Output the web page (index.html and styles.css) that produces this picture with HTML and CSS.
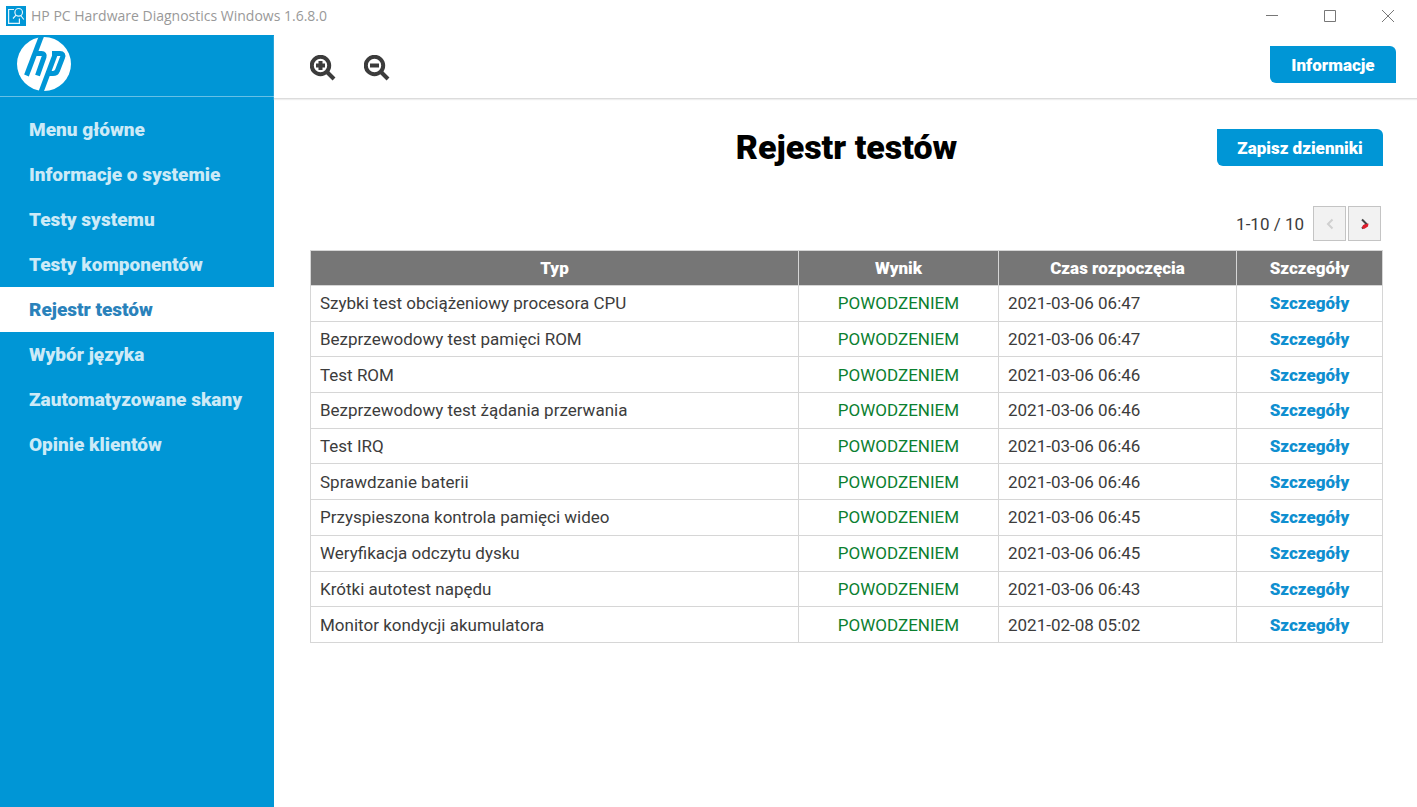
FILE: index.html
```
<!DOCTYPE html>
<html lang="pl">
<head>
<meta charset="utf-8">
<title>HP PC Hardware Diagnostics Windows 1.6.8.0</title>
<link rel="stylesheet" href="styles.css">
</head>
<body>
<header class="titlebar">
  <svg class="app-icon" viewBox="0 0 20 20" aria-hidden="true">
    <rect width="20" height="20" fill="#0096d6"/>
    <g fill="none" stroke="#e4f5fc" stroke-width="1.200">
      <path d="M8 3.500H2.600V17.400H13.400V12.500"/>
      <circle cx="12.700" cy="6.300" r="3.800"/>
      <path d="M10 9.200L7 12.500M14.800 9.500L17.800 13.500"/>
    </g>
  </svg>
  <span class="app-name">HP PC Hardware Diagnostics Windows 1.6.8.0</span>
  <div class="window-controls">
    <button class="window-button" aria-label="Minimalizuj"><svg viewBox="0 0 14 14"><path d="M1 6.500h12"/></svg></button>
    <button class="window-button" aria-label="Maksymalizuj"><svg viewBox="0 0 14 14"><path d="M1.500 1.500h11v11h-11z"/></svg></button>
    <button class="window-button" aria-label="Zamknij"><svg viewBox="0 0 14 14"><path d="M1 1l12 12M13 1L1 13"/></svg></button>
  </div>
</header>
<div class="app">
  <aside class="sidebar">
    <div class="brand">
      <svg class="logo" viewBox="0 0 54 54" role="img" aria-label="HP">
        <circle cx="27" cy="27" r="27" fill="#fff"/>
        <g fill="none" stroke="#0096d6" stroke-width="5">
          <path d="M24.500 -1L9.500 38.500"/>
          <path d="M17 16.500H24.500Q28 16.500 27 20L20.500 38.500"/>
          <path d="M38.500 16.500L24 55"/>
          <path d="M35 16.500H43Q47 16.500 45.500 20.500L40.500 33.500Q39.300 36.500 36 36.500H29"/>
        </g>
      </svg>
    </div>
    <nav class="menu">
      <a class="menu-item" href="#">Menu główne</a>
      <a class="menu-item" href="#">Informacje o systemie</a>
      <a class="menu-item" href="#">Testy systemu</a>
      <a class="menu-item" href="#">Testy komponentów</a>
      <a class="menu-item active" href="#" aria-current="page">Rejestr testów</a>
      <a class="menu-item" href="#">Wybór języka</a>
      <a class="menu-item" href="#">Zautomatyzowane skany</a>
      <a class="menu-item" href="#">Opinie klientów</a>
    </nav>
  </aside>
  <main class="content">
    <div class="toolbar">
      <button class="zoom-button" aria-label="Powiększ"><svg viewBox="0 0 26 26"><circle cx="10.500" cy="10.500" r="8.700"/><path d="M16.500 16.500L24 24"/><path class="sign" d="M6 10.500h9M10.500 6v9"/></svg></button>
      <button class="zoom-button" aria-label="Pomniejsz"><svg viewBox="0 0 26 26"><circle cx="10.500" cy="10.500" r="8.700"/><path d="M16.500 16.500L24 24"/><path class="sign" d="M6 10.500h9"/></svg></button>
      <button class="action info">Informacje</button>
    </div>
    <section class="log">
      <div class="heading">
        <h1 class="title">Rejestr testów</h1>
        <button class="action save">Zapisz dzienniki</button>
      </div>
      <div class="pager">
        <span class="range">1-10 / 10</span>
        <button class="page-button" aria-label="Poprzednia" disabled><svg viewBox="0 0 10 12"><path d="M7.500 1.500L3 6l4.500 4.500" fill="none" stroke="#d0d0d0" stroke-width="2"/></svg></button>
        <button class="page-button" aria-label="Następna"><svg viewBox="0 0 10 12"><path d="M2 1.500L6.500 6L2 10.500" fill="none" stroke="#444" stroke-width="2"/><path d="M3 7L8.500 5.500L8 8.500L4 11L2 10z" fill="#e01e2d"/></svg></button>
      </div>
      <table class="results">
        <colgroup><col class="c-type"><col class="c-result"><col class="c-time"><col class="c-details"></colgroup>
        <thead><tr><th>Typ</th><th>Wynik</th><th>Czas rozpoczęcia</th><th>Szczegóły</th></tr></thead>
        <tbody>
          <tr><td>Szybki test obciążeniowy procesora CPU</td><td class="ok">POWODZENIEM</td><td>2021-03-06 06:47</td><td class="more"><a href="#">Szczegóły</a></td></tr>
          <tr><td>Bezprzewodowy test pamięci ROM</td><td class="ok">POWODZENIEM</td><td>2021-03-06 06:47</td><td class="more"><a href="#">Szczegóły</a></td></tr>
          <tr><td>Test ROM</td><td class="ok">POWODZENIEM</td><td>2021-03-06 06:46</td><td class="more"><a href="#">Szczegóły</a></td></tr>
          <tr><td>Bezprzewodowy test żądania przerwania</td><td class="ok">POWODZENIEM</td><td>2021-03-06 06:46</td><td class="more"><a href="#">Szczegóły</a></td></tr>
          <tr><td>Test IRQ</td><td class="ok">POWODZENIEM</td><td>2021-03-06 06:46</td><td class="more"><a href="#">Szczegóły</a></td></tr>
          <tr><td>Sprawdzanie baterii</td><td class="ok">POWODZENIEM</td><td>2021-03-06 06:46</td><td class="more"><a href="#">Szczegóły</a></td></tr>
          <tr><td>Przyspieszona kontrola pamięci wideo</td><td class="ok">POWODZENIEM</td><td>2021-03-06 06:45</td><td class="more"><a href="#">Szczegóły</a></td></tr>
          <tr><td>Weryfikacja odczytu dysku</td><td class="ok">POWODZENIEM</td><td>2021-03-06 06:45</td><td class="more"><a href="#">Szczegóły</a></td></tr>
          <tr><td>Krótki autotest napędu</td><td class="ok">POWODZENIEM</td><td>2021-03-06 06:43</td><td class="more"><a href="#">Szczegóły</a></td></tr>
          <tr><td>Monitor kondycji akumulatora</td><td class="ok">POWODZENIEM</td><td>2021-02-08 05:02</td><td class="more"><a href="#">Szczegóły</a></td></tr>
        </tbody>
      </table>
    </section>
  </main>
</div>
</body>
</html>
```
FILE: styles.css
```
* { box-sizing: border-box; }
body {
  margin: 0;
  min-height: 100vh;
  display: flex;
  flex-direction: column;
  background: #fff;
  color: #3c3c3c;
  font: 17px/20px Roboto, "Liberation Sans", sans-serif;
}
button { margin: 0; padding: 0; border: 0; background: none; color: inherit; font: inherit; }
a { color: inherit; text-decoration: none; }
svg { display: block; }

.titlebar { display: flex; align-items: center; height: 35px; padding: 0 0 3px 6px; }
.app-icon { width: 20px; height: 20px; margin-right: 5px; }
.app-name { color: #999; font: 14px/20px "Open Sans", "Noto Sans", sans-serif; }
.window-controls { display: flex; margin-left: auto; }
.window-button { display: grid; place-items: center; width: 58px; height: 32px; }
.window-button svg { width: 14px; height: 14px; fill: none; stroke: #777; stroke-width: 1; }

.app { flex: 1; display: flex; }
.sidebar { flex: none; width: 274px; background: #0096d6; }
.brand { height: 62px; padding: 2px 17px; border-bottom: 1px solid #66c0e6; }
.logo { width: 54px; height: 54px; }
.menu { display: flex; flex-direction: column; padding-top: 10px; }
.menu-item {
  padding: 1px 29px 0;
  color: #cceaf7;
  font-size: 19px;
  font-weight: 900;
  line-height: 44px;
  white-space: nowrap;
}
.menu-item.active { background: #fff; color: #2a82bb; }

.content { flex: 1; min-width: 0; }
.toolbar {
  display: flex;
  align-items: center;
  gap: 28px;
  height: 64px;
  padding: 0 21px 4px 36px;
  border-bottom: 1px solid #dcdcdc;
  box-shadow: 0 1px 1px #eee;
}
.zoom-button svg { width: 26px; height: 26px; margin-top: 6px; fill: none; stroke: #3c3c3c; stroke-width: 4; }
.action {
  height: 37px;
  border-radius: 0 6px;
  background: #0096d6;
  color: #fff;
  font-weight: 900;
  white-space: nowrap;
}
.info { width: 126px; margin-left: auto; }
.save { width: 166px; justify-self: end; }

.log { padding: 30px 34px 0 36px; }
.heading { display: grid; grid-template-columns: 1fr auto 1fr; align-items: center; }
.title { grid-column: 2; margin: 0; color: #000; font-size: 34px; line-height: 37px; font-weight: 900; }
.pager { display: flex; align-items: center; justify-content: flex-end; gap: 2px; margin-top: 40px; padding-right: 2px; }
.range { margin-right: 7px; }
.page-button { display: grid; place-items: center; width: 33px; height: 35px; border: 1px solid #c4c4c4; background: #f2f2f2; }
.page-button svg { width: 10px; height: 12px; }

.results { width: 100%; height: 393px; margin-top: 9px; border-collapse: collapse; table-layout: fixed; }
.c-result { width: 200px; }
.c-time { width: 238px; }
.c-details { width: 146px; }
.results th, .results td { padding: 0 9px; border: 1px solid #d6d6d6; white-space: nowrap; }
.results th { height: 35px; background: #767676; color: #fff; font-weight: 900; text-align: center; }
.results td { text-align: left; }
.results .ok { color: #0b8030; text-align: center; }
.results .more { color: #0f8fd0; font-weight: 900; text-align: center; }
```
